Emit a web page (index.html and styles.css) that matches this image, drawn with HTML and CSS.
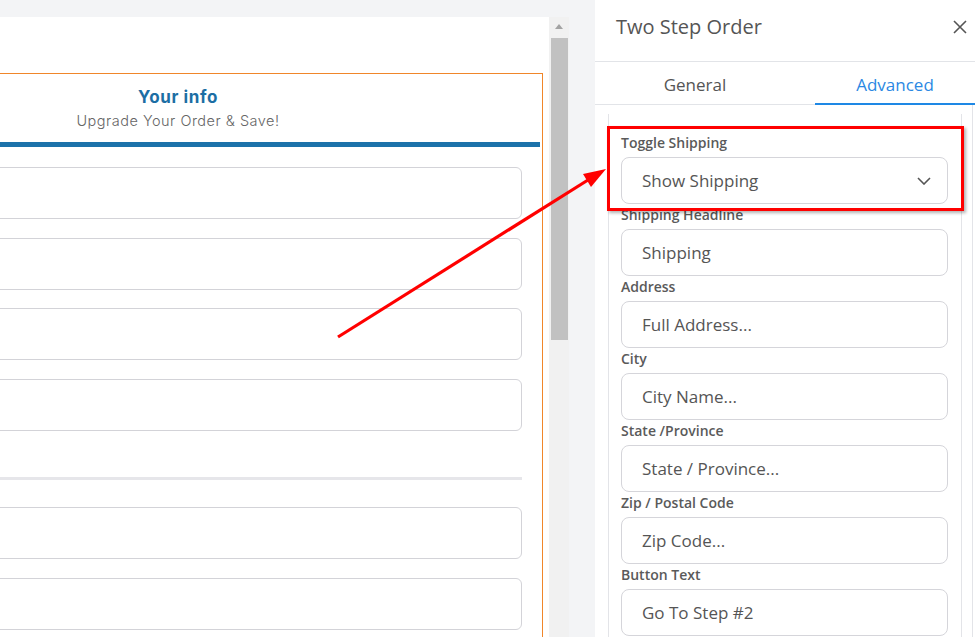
FILE: index.html
```html
<!DOCTYPE html>
<html>
<head>
    <meta charset="UTF-8">
    <title>Two Step Order</title>
    <link rel="stylesheet" href="styles.css">
</head>
<body>
    <div class="app">
        <div class="editor">
            <div class="canvas">
                <div class="step-box">
                    <div class="step-head">
                        <div class="step-title">Your info</div>
                        <div class="step-sub">Upgrade Your Order &amp; Save!</div>
                    </div>
                    <div class="step-bar"></div>
                    <div class="step-fields">
                        <div class="fake-input"></div>
                        <div class="fake-input"></div>
                        <div class="fake-input"></div>
                        <div class="fake-input"></div>
                        <div class="divider"></div>
                        <div class="fake-input"></div>
                        <div class="fake-input"></div>
                    </div>
                </div>
            </div>
            <div class="vscroll">
                <div class="vscroll-up"></div>
                <div class="vscroll-thumb"></div>
            </div>
        </div>

        <div class="panel">
            <div class="panel-head">
                <span class="panel-title">Two Step Order</span>
                <svg class="close" width="14" height="14" viewBox="0 0 14 14">
                    <path d="M1 1L13 13M13 1L1 13" stroke="#555" stroke-width="1.6" fill="none"/>
                </svg>
            </div>
            <div class="tabs">
                <div class="tab">General</div>
                <div class="tab active">Advanced</div>
            </div>
            <div class="panel-body">
                <div class="settings">
                    <div class="form-group">
                        <label>Toggle Shipping</label>
                        <div class="field select">
                            <span>Show Shipping</span>
                            <svg width="14" height="8" viewBox="0 0 14 8">
                                <path d="M1 1L7 7L13 1" stroke="#555" stroke-width="1.6" fill="none"/>
                            </svg>
                        </div>
                    </div>
                    <div class="form-group">
                        <label>Shipping Headline</label>
                        <div class="field">Shipping</div>
                    </div>
                    <div class="form-group">
                        <label>Address</label>
                        <div class="field">Full Address...</div>
                    </div>
                    <div class="form-group">
                        <label>City</label>
                        <div class="field">City Name...</div>
                    </div>
                    <div class="form-group">
                        <label>State /Province</label>
                        <div class="field">State / Province...</div>
                    </div>
                    <div class="form-group">
                        <label>Zip / Postal Code</label>
                        <div class="field">Zip Code...</div>
                    </div>
                    <div class="form-group">
                        <label>Button Text</label>
                        <div class="field">Go To Step #2</div>
                    </div>
                </div>
            </div>
        </div>
    </div>

    <!-- annotation drawn over the screenshot -->
    <div class="highlight"></div>
    <svg class="arrow" width="975" height="637" viewBox="0 0 975 637">
        <line x1="338" y1="337" x2="588" y2="180" stroke="#ff0000" stroke-width="3.2"/>
        <polygon points="606,169 591,187 583,174" fill="#ff0000"/>
    </svg>
</body>
</html>
```

FILE: styles.css
```css
body {
    margin: 0;
    padding: 0;
    width: 975px;
    height: 637px;
    overflow: hidden;
    background-color: #F3F4F6;
    font-family: "Open Sans", "Noto Sans", sans-serif;
}

.app {
    display: flex;
    height: 637px;
}

/* left: page canvas */
.editor {
    display: flex;
    width: 569px;
    padding-top: 17px;
    box-sizing: border-box;
}

.canvas {
    width: 549px;
    background-color: #FFFFFF;
    overflow: hidden;
}

.step-box {
    width: 730px;
    margin-left: -187px;
    margin-top: 56px;
    border: 1px solid #F0862A;
    border-bottom: none;
    box-sizing: border-box;
    padding: 0 2px;
    height: 600px;
    font-family: Inter, "Open Sans", sans-serif;
}

.step-head {
    text-align: center;
    padding: 12px 0 11px;
}

.step-title {
    font-size: 17px;
    line-height: 22px;
    font-weight: 700;
    color: #1C6EA4;
    letter-spacing: 0.6px;
}

.step-sub {
    margin-top: 3px;
    font-size: 14.5px;
    line-height: 20px;
    font-weight: 300;
    color: #666666;
    letter-spacing: 0.5px;
}

.step-bar {
    height: 5px;
    background-color: #1C72AA;
}

.step-fields {
    padding: 20px 18px 0;
}

.fake-input {
    height: 52px;
    border: 1px solid #D3D3D8;
    border-radius: 6px;
    box-sizing: border-box;
    margin-bottom: 18.7px;
}

.divider {
    height: 3px;
    background-color: #E6E6EA;
    margin: 46px 0 27px;
}

.vscroll {
    width: 20px;
    background-color: #F1F1F1;
}

.vscroll-up {
    height: 21px;
    position: relative;
}

.vscroll-up::after {
    content: "";
    position: absolute;
    left: 6px;
    top: 7px;
    border-left: 4px solid transparent;
    border-right: 4px solid transparent;
    border-bottom: 5px solid #A3A3A3;
}

.vscroll-thumb {
    height: 302px;
    margin: 0 1px 0 2px;
    background-color: #C1C1C1;
}

/* right: settings panel */
.panel {
    margin-left: 26px;
    width: 380px;
    background-color: #FFFFFF;
    overflow: hidden;
    color: #555555;
}

.panel-head {
    height: 62px;
    border-bottom: 1px solid #E2E4E8;
    box-sizing: border-box;
    display: flex;
    align-items: center;
    justify-content: space-between;
    padding: 0 8px 8px 21px;
}

.panel-title {
    font-size: 20px;
    color: #555555;
}

.close {
    display: block;
}

.tabs {
    display: flex;
    width: 400px;
    height: 43px;
    border-bottom: 1px solid #E2E4E8;
    box-sizing: border-box;
}

.tab {
    width: 200px;
    text-align: center;
    font-size: 17px;
    padding-top: 4px;
    line-height: 38px;
    color: #555555;
    position: relative;
}

.tab.active {
    color: #2B88E3;
}

.tab.active::after {
    content: "";
    position: absolute;
    left: 20px;
    right: 20px;
    bottom: -1px;
    height: 2px;
    background-color: #1E88E5;
}

.panel-body {
    padding: 9px 0 0 13px;
    width: 378px;
    height: 540px;
    border-right: 1px solid #E3E4E8;
    box-sizing: border-box;
}

.settings {
    width: 354px;
    height: 540px;
    border-left: 1px solid #E3E4E8;
    border-right: 1px solid #E3E4E8;
    box-sizing: border-box;
    padding: 18px 13px 0 12px;
}

.form-group label {
    display: block;
    font-size: 14px;
    font-weight: 600;
    line-height: 21px;
    margin-bottom: 4px;
    color: #5A5A5A;
}

.field {
    height: 47px;
    border: 1px solid #D5D5DA;
    border-radius: 8px;
    box-sizing: border-box;
    padding: 0 16px 0 20px;
    display: flex;
    align-items: center;
    font-size: 17px;
    color: #555555;
}

.select {
    justify-content: space-between;
}

/* annotation overlay */
.highlight {
    position: absolute;
    left: 607px;
    top: 126px;
    width: 357px;
    height: 85px;
    border: 3px solid #FF0000;
    box-sizing: border-box;
    box-shadow: 2px 2px 3px rgba(0, 0, 0, 0.3);
}

.arrow {
    position: absolute;
    left: 0;
    top: 0;
}
```
